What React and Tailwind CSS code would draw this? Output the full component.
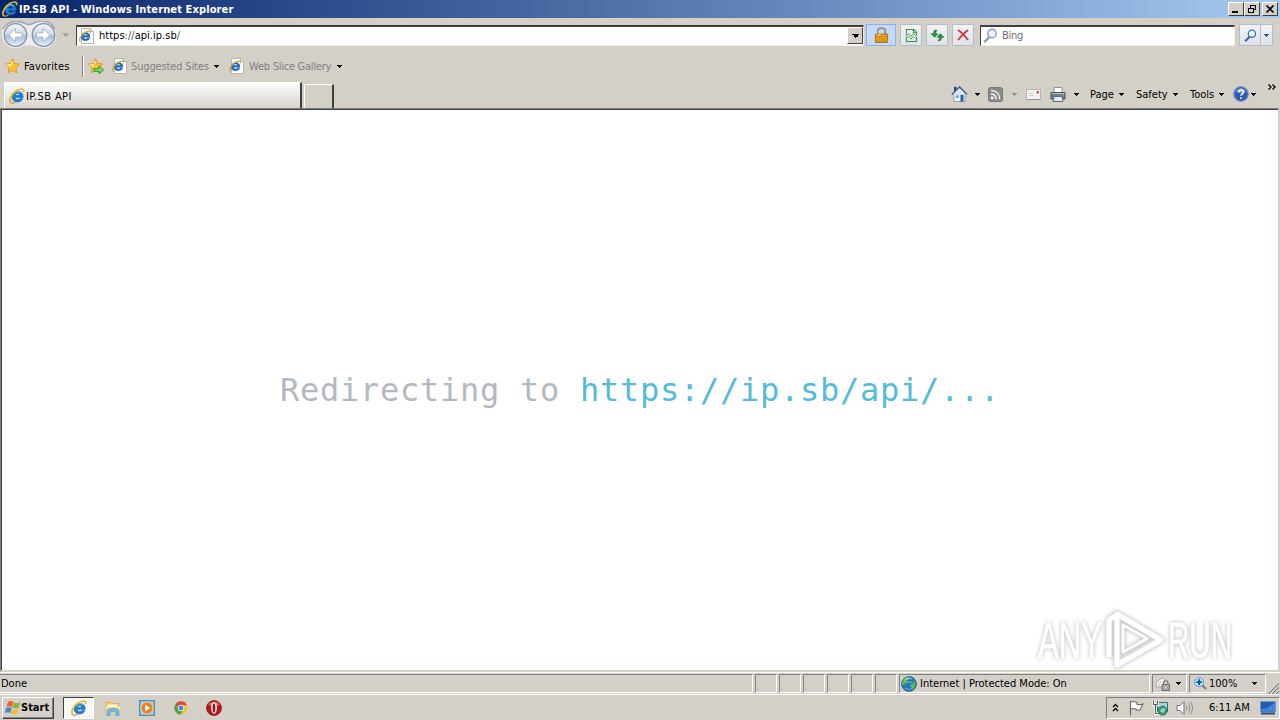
import React from 'react';
import clsx from 'clsx';

/* ---------- Icons ---------- */

const IeLogo = ({ className }) => (
  <svg viewBox="0 0 16 16" className={clsx('shrink-0', className)}>
    <path
      d="M14.200 9.400H6.300c.2 2.700 3.600 2.700 4.600 1h3c-1.700 5.300-10.900 4.700-10.900-1.700C3 1.600 14.700 1.200 14.200 9.400ZM6.300 7.200h4.500c-.2-2.400-4.200-2.400-4.500 0Z"
      fill="#1e80da"
      stroke="#125aa8"
      strokeWidth=".5"
    />
    <path d="M4.500 5.800C5.800 3.600 9.500 3 11.600 4.600" fill="none" stroke="#8fd2fb" strokeWidth="1" />
    <path
      d="M2.300 15C-1.200 13.500 2.200 5.800 7.800 2.600c3.700-2.100 7.900-2.600 6.700 1.700"
      fill="none"
      stroke="#e3b92c"
      strokeWidth="1.700"
    />
    <path d="M2.300 15c1.200.4 2.800-.1 4.200-1" fill="none" stroke="#c9981c" strokeWidth="1.300" />
  </svg>
);

const IePage = ({ className }) => (
  <svg viewBox="0 0 16 16" className={clsx('h-4 w-4 shrink-0', className)}>
    <path d="M2.500.5h9l3 3v12h-12Z" fill="#fff" stroke="#b4b4b4" />
    <path d="M11.500.5v3h3" fill="#eee" stroke="#b4b4b4" />
    <path
      d="M11 9.200H4.600c.2 2.200 2.900 2.300 3.800.9h2.400C9.300 14.300 2 13.600 2.200 8.700 2.400 3.200 11.400 2.800 11 9.200ZM4.700 7.400h3.700c-.2-1.900-3.400-1.900-3.700 0Z"
      fill="#1c6cc4"
      stroke="#1c5ca8"
      strokeWidth=".4"
    />
    <path d="M1.400 13.500C-.8 11.700 2.500 6.300 6.300 4.200c3-1.700 5.800-1.600 5 1" fill="none" stroke="#cfae2c" strokeWidth="1.300" />
  </svg>
);

const Star = ({ arrow }) => (
  <svg viewBox="0 0 16 16" className="h-4 w-4 shrink-0">
    <path
      d="m7.500.8 2 4.700 5.300.5-4 3.600 1.200 5.400-4.500-2.800L3 15l1.200-5.400L.4 6l5.100-.5Z"
      fill="#ffc22e"
      stroke="#e0921c"
      strokeWidth=".9"
    />
    <path d="M7.500 3 6.200 6.400l-3.400.4 3 2" fill="none" stroke="#fff0a0" strokeWidth="1.200" />
    {arrow && <path d="M6 10.500h5V8l4.600 4-4.600 3.700v-2.400H6Z" fill="#7fdc5c" stroke="#24951d" strokeWidth=".9" />}
  </svg>
);

const Caret = ({ className = 'h-[3px] w-[5px]', color = '#000' }) => (
  <svg viewBox="0 0 5 3" className={clsx('shrink-0', className)} shapeRendering="crispEdges">
    <path d="M0 0h5v1H4v1H3v1H2V2H1V1H0Z" fill={color} />
  </svg>
);

const NavButtons = () => (
  <svg viewBox="0 0 56 28" className="h-7 w-14 shrink-0">
    <defs>
      <linearGradient id="orb" x1="0" y1="0" x2="0" y2="1">
        <stop offset="0" stopColor="#f4f7fb" />
        <stop offset=".48" stopColor="#ccd8e8" />
        <stop offset=".52" stopColor="#a9bcd6" />
        <stop offset="1" stopColor="#e6f3ff" />
      </linearGradient>
    </defs>
    <path d="M14 .5c8 0 9 3 14 3S34 .5 42 .5a13.200 13.200 0 0 1 0 26.600c-7 0-8-3-14-3s-7 3-14 3A13.200 13.200 0 0 1 14 .5Z" fill="#eeeeef" />
    <path d="M2 8C8-2 20 0 24 2.500c3 1.500 5 1.500 8 0 5-3 17-5 22 5.500" fill="none" stroke="#a3a4aa" strokeWidth="1.500" />
    {[14.500, 42.500].map((x) => (
      <circle key={x} cx={x} cy="14" r="11.300" fill="url(#orb)" stroke="#8190a5" strokeWidth="1.200" />
    ))}
    <path d="m14.500 7.500-7 6.500 7 6.500v-4.300H21v-4.400h-6.500Z" fill="#fff" stroke="#9babc0" strokeWidth=".8" />
    <path d="m42 7.500 7 6.500-7 6.500v-4.300h-6.500v-4.400H42Z" fill="#fff" stroke="#9babc0" strokeWidth=".8" />
  </svg>
);

const Padlock = ({ className }) => (
  <svg viewBox="0 0 16 17" className={className}>
    <path d="M4 8V5c0-5 8-5 8 0v3" fill="none" stroke="#8c8676" strokeWidth="2" />
    <path d="M4.300 7V5c0-4 7.400-4 7.400 0" fill="none" stroke="#ddd8c8" strokeWidth=".7" />
    <path d="M1.500 7.500h13v9h-13Z" fill="#eaa91d" stroke="#ad720a" />
    <path d="M2 10h12M2 12.500h12M2 15h12" stroke="#bd7e0c" strokeWidth=".9" />
    <path d="M3 8.500h4" stroke="#ffe17c" />
  </svg>
);

const BrokenPage = () => (
  <svg viewBox="0 0 14 16" className="h-[15px] w-[13px]">
    <path d="M1.500 8V1.500h8l3 3V8M9 1.500V5h3.500M1.500 10v4.500h11V10" fill="none" stroke="#3b9148" strokeWidth="1.100" />
    <path d="m1 9 3-3 2.500 3L9 6l3.500 3M1 12l3-3 2.500 3L9 9l3.500 3" fill="none" stroke="#4fa65a" />
  </svg>
);

const Refresh = () => (
  <svg viewBox="0 0 16 14" className="h-[13px] w-[15px]">
    <path d="M7.500 1.500C5 .5 3.600 2 3.600 5H1l4 4 3.500-4H6c0-1.500.4-2.500 1.500-3.500Z" fill="#299139" stroke="#16702a" strokeWidth=".6" />
    <path d="M8.500 12.500c2.500 1 3.900-.5 3.900-3.500H15l-4-4-3.500 4H10c0 1.500-.4 2.500-1.500 3.500Z" fill="#299139" stroke="#16702a" strokeWidth=".6" />
  </svg>
);

const Cross = () => (
  <svg viewBox="0 0 12 12" className="h-3 w-3">
    <path d="M1 1c4 2.500 7 6 10 10M11 1C7 4 4 7.500 1 11" fill="none" stroke="#c93a41" strokeWidth="1.900" />
  </svg>
);

const Glass = ({ className, color }) => (
  <svg viewBox="0 0 16 16" className={className}>
    <path d="M7 9.500 1.300 15" stroke={color} strokeWidth="2.600" />
    <circle cx="9.700" cy="5.800" r="4.500" fill="#e8f3fd" stroke={color} strokeWidth="1.500" />
    <path d="M7.200 5.500c.3-1.500 1.500-2.200 2.800-2.200" fill="none" stroke="#fff" />
  </svg>
);

const Home = () => (
  <svg viewBox="0 0 17 16" className="h-4 w-[17px] shrink-0">
    <path d="M3 8h11v7.500H3Z" fill="#f2f6fb" stroke="#7d8ba3" strokeWidth=".8" />
    <path d="M3 .8h2.500v5H3Z" fill="#273f7b" />
    <path d="M.8 8.500 8.500 1l7.700 7.500" fill="#dce7f5" stroke="#435c91" strokeWidth="1.500" />
    <path d="M9.500 9h3v6.500h-3Z" fill="#17659e" />
    <path d="M4.800 9.300h3v2.800h-3Z" fill="#6fa5d3" />
  </svg>
);

const Feed = () => (
  <svg viewBox="0 0 15 15" className="h-[15px] w-[15px] shrink-0">
    <rect x=".5" y=".5" width="14" height="14" rx="2" fill="#8b8b8b" stroke="#777" />
    <circle cx="4.200" cy="11" r="1.400" fill="#fff" />
    <path d="M3 7c3 0 5 2 5 5.200M3 3.500c5.500 0 8.700 3.500 8.700 8.700" fill="none" stroke="#f4f4f4" strokeWidth="1.500" />
  </svg>
);

const Mail = () => (
  <svg viewBox="0 0 15 11" className="h-[11px] w-[15px] shrink-0">
    <path d="M.5.500h14v10H.5Z" fill="#f3f2f1" stroke="#b9b5b4" />
    <path d="M2 4.500h5M3 6.500h5" stroke="#d5d2d0" />
    <path d="M10.500 2H13v2.500h-2.500Z" fill="#cf5a57" />
    <path d="M.5 10.500h14" stroke="#929090" />
  </svg>
);

const Printer = () => (
  <svg viewBox="0 0 16 15" className="h-[15px] w-4 shrink-0">
    <path d="M4 .5h8V6H4Z" fill="#fff" stroke="#8b929a" />
    <path d="M1 5.500h14v6.500H1Z" fill="#737b84" stroke="#4b525a" />
    <path d="M1.500 6.500h13" stroke="#b9c0c7" />
    <path d="M4 9.500h8l1 5H3Z" fill="#dcecfb" stroke="#646b75" />
    <path d="M12.500 8h1.500" stroke="#8ad15d" />
  </svg>
);

const Help = () => (
  <svg viewBox="0 0 16 16" className="h-4 w-4 shrink-0">
    <circle cx="8" cy="8" r="7.300" fill="#2b58b9" stroke="#8795b2" strokeWidth="1.200" />
    <path d="M3 6c1-5 9-5 10 0-3 1-6 1.400-10 0Z" fill="#779ee3" />
    <path d="M5.800 6.300c0-3.200 4.800-3 4.600-.2C10.300 7.800 8 7.800 8 9.700M8 11.200v1.700" fill="none" stroke="#fff" strokeWidth="1.600" />
  </svg>
);

const Globe = () => (
  <svg viewBox="0 0 16 16" className="h-4 w-4 shrink-0">
    <circle cx="8" cy="8" r="7.400" fill="#2470bb" stroke="#285b81" strokeWidth=".8" />
    <path d="M3 3c3-3 5-2 5-1L6 4l1 2-3 1-.5 2.500-2.500-1C1 6 1 5 3 3ZM12 4l2 2c1 4-1 7-3 8l-.5-2.500-2-1.500 1.500-2 2.500-1Z" fill="#54bd49" />
    <path d="M2.800 5c2-4 7-4 9-1.500C9 3 6 3 2.800 5Z" fill="#c1e8fb" opacity=".7" />
    <path d="M4 12c3 2 6 2 8-1M5 7.500c2-2 4-2 6-1" fill="none" stroke="#6dc8ef" />
  </svg>
);

const ZoneLock = () => (
  <svg viewBox="0 0 16 15" className="h-[15px] w-4 shrink-0">
    <path d="M1 11C1 5 6 1 10 3l-3 8Z" fill="#f7f7f7" stroke="#aaa9a6" />
    <path d="m3 11 3-6M6 11l4-6" stroke="#bbb9b6" />
    <path d="M8.500 9V7c0-3 4.500-3 4.500 0v2" fill="none" stroke="#77736f" strokeWidth="1.200" />
    <path d="M7 8.500h7.500v6H7Z" fill="#aaa6a4" stroke="#76716e" />
    <path d="M10.700 10.500v2" stroke="#fff" />
  </svg>
);

const ZoomIn = () => (
  <svg viewBox="0 0 14 14" className="h-[13px] w-[13px] shrink-0">
    <path d="m8.500 8.500 4.500 4.500" stroke="#8a7a66" strokeWidth="2.200" />
    <circle cx="5.500" cy="5.500" r="4.800" fill="#c5e3fb" stroke="#5295d1" />
    <path d="M5.500 2.500v6M2.500 5.500h6" stroke="#0758ad" strokeWidth="2" />
  </svg>
);

const WindowsFlag = () => (
  <svg viewBox="0 0 16 16" className="h-4 w-4 shrink-0">
    <path d="M3 2c2-1.500 4-1 5.500 0L7 7.200C5 6 3.500 6 1.500 7Z" fill="#ed6130" />
    <path d="M9.200 2.500c2 1 4 1 6-.2L13.700 7.500c-2 1.200-4 1-6 .2Z" fill="#80b637" />
    <path d="M1.200 8c2-1 3.800-1 5.500.2l-1.500 5C3.500 12 2 12.100-.1 13Z" fill="#4285cb" />
    <path d="M7.500 8.800c2 1 4 1 6-.2L12 13.700c-2 1.200-4 1-6 .1Z" fill="#f5bd2b" />
  </svg>
);

const Folder = () => (
  <svg viewBox="0 0 16 16" className="h-4 w-4 shrink-0">
    <path d="M1 2h5l1.500 1.500H14V14H1Z" fill="#edca65" stroke="#d1a33d" strokeWidth=".7" />
    <path d="M2.500 4.500h10v3h-10Z" fill="#fffbe2" />
    <path d="M1 6.500h14V14H1Z" fill="#f9e499" />
    <path d="M2 15.500V11c0-2 2-2.500 6-2.500s6 .5 6 2.500v4.500h-3V12H5v3.500Z" fill="#75bce9" stroke="#4d9aca" strokeWidth=".7" />
  </svg>
);

const MediaPlayer = () => (
  <svg viewBox="0 0 16 16" className="h-4 w-4 shrink-0">
    <path d="M.7.7h14.600v14.600H.7Z" fill="#a4cded" stroke="#4d8fbd" strokeWidth="1.300" />
    <circle cx="8" cy="8" r="5.900" fill="#f07d16" stroke="#f8d4a2" strokeWidth=".8" />
    <path d="m6.200 4.500 5.200 3.500-5.200 3.500Z" fill="#fff" />
  </svg>
);

const Chrome = () => (
  <svg viewBox="0 0 16 16" className="h-[14px] w-[14px] shrink-0">
    <circle cx="8" cy="8" r="7.600" fill="#efc93b" />
    <path d="M1.400 4.200A7.600 7.600 0 0 1 14.900 4.800H8L4.700 8Z" fill="#d94b3d" />
    <path d="M1.400 4.200A7.600 7.600 0 0 0 7.200 15.600l3.500-5.200-5.700-1Z" fill="#47a34e" />
    <circle cx="8" cy="8" r="3.600" fill="#eef5f9" />
    <circle cx="8" cy="8" r="2.800" fill="#4788c9" />
  </svg>
);

const Opera = () => (
  <svg viewBox="0 0 16 16" className="h-4 w-4 shrink-0">
    <circle cx="8" cy="8" r="7.500" fill="#b8161b" stroke="#851416" strokeWidth=".7" />
    <path d="M2.500 4.500c2-3 8.500-4 11 0-2 2.500-8 2-11 0Z" fill="#e56b67" />
    <ellipse cx="8" cy="8" rx="2.900" ry="5.800" fill="#fff" />
    <ellipse cx="8" cy="8" rx="1.400" ry="4.600" fill="#8e171b" />
  </svg>
);

const Flag = () => (
  <svg viewBox="0 0 16 16" className="h-4 w-4 shrink-0">
    <path d="M2.500 1v14.500M3 2c3-1.500 4 0 6 .5v1.800c2 .6 4 .4 6-.3l-3 6c-2 .6-3.500 0-4.500-1-1.500-.8-3-.6-4.500 0" fill="#fafafa" stroke="#6c6b69" strokeWidth="1.100" />
  </svg>
);

const Network = () => (
  <svg viewBox="0 0 16 16" className="h-4 w-4 shrink-0">
    <path d="M5.500 2.500h10v9h-10Z" fill="#9fd5dc" stroke="#4e6668" />
    <path d="M1.500.5v4h4v-4M3.500 4.500v9h4" fill="none" stroke="#fff" strokeWidth="2.800" />
    <path d="M1.500.5v4h4v-4M3.500 4.500v9h4" fill="none" stroke="#5e5e5c" strokeWidth="1.200" />
    <circle cx="10.500" cy="10.700" r="4.600" fill="#34947f" stroke="#26675e" strokeWidth=".6" />
    <path d="m7.500 11 3-3 3 1-2 4Z" fill="#8fe0a4" />
  </svg>
);

const Speaker = () => (
  <svg viewBox="0 0 17 16" className="h-4 w-[17px] shrink-0">
    <path d="M1 5.500h3L8 1.500v13L4 10.500H1Z" fill="#f7f7f7" stroke="#727272" />
    <path d="M10 5.500c1.300 1.500 1.300 3.500 0 5M12 3.500c2.400 2.500 2.400 6.500 0 9M14 1.800c3.300 3.500 3.300 9 0 12.500" fill="none" stroke="#888" />
  </svg>
);

const Desktop = () => (
  <svg viewBox="0 0 16 14" className="h-[14px] w-4 shrink-0">
    <path d="M.5.5h15v10.500H.5Z" fill="#205aaf" stroke="#7498cb" />
    <path d="M1 8C6 8 11 5 15 1v9.500H1Z" fill="#3d83d6" />
    <path d="M1 12.500h14" stroke="#374b6d" strokeWidth="2" />
  </svg>
);

const Watermark = () => (
  <div className="absolute top-[608px] left-[1034px] h-16 w-[208px] opacity-90 drop-shadow-[0_0_2px_#b0b0b0]">
    <svg
      viewBox="-4 0 208 64"
      className="h-16 w-[208px]"
      fontFamily="'Liberation Sans', sans-serif"
      fontSize="50"
      fill="#fff"
      stroke="#fff"
      strokeWidth=".8"
    >
      <text x="0" y="50" textLength="64" lengthAdjust="spacingAndGlyphs">ANY</text>
      <text x="130" y="50" textLength="64" lengthAdjust="spacingAndGlyphs">RUN</text>
      <g fill="none" stroke="#dcdcdc" strokeLinejoin="round">
        <path d="M71 49V12l6-4M79 6l44 26-44 25Z" strokeWidth="6.500" />
        <path d="M85 17v27l24-13.500Z" strokeWidth="4" />
        <path d="M71 49V12l6-4M79 6l44 26-44 25Z" stroke="#fff" strokeWidth="5" />
        <path d="M85 17v27l24-13.500Z" stroke="#fff" strokeWidth="2.500" />
        <path d="M82 13v38l33-19" stroke="#e2e2e2" strokeWidth="1" />
      </g>
    </svg>
  </div>
);

/* ---------- Small building blocks ---------- */

const Label = ({ className, children }) => (
  <span className={clsx('block shrink-0 whitespace-nowrap', className)}>{children}</span>
);

const CaptionButton = ({ className, children }) => (
  <div
    className={clsx(
      'flex h-[14px] w-4 items-center justify-center border border-t-white border-r-[#404040] border-b-[#404040] border-l-white bg-[#d4d0c8]',
      className
    )}
  >
    <svg viewBox="0 0 14 12" className="h-3 w-[14px]" fill="none" stroke="#000" shapeRendering="crispEdges">
      {children}
    </svg>
  </div>
);

const ToolButton = ({ className = 'w-[22px]', children }) => (
  <div
    className={clsx(
      'flex h-[22px] shrink-0 items-center justify-center rounded-[1px] border border-[#b3bccb] bg-linear-to-b from-[#f0f2f5] to-[#dfe3e9]',
      className
    )}
  >
    {children}
  </div>
);

/* ---------- Window parts ---------- */

const TitleBar = () => (
  <div className="flex h-[18px] items-center bg-linear-to-r from-[#0a246a] to-[#a6caf0] pl-[2px]">
    <IeLogo className="h-4 w-4" />
    <Label className="ml-[1px] text-[11px] font-bold tracking-[0.12px] text-white">IP.SB API - Windows Internet Explorer</Label>
    <div className="ml-auto flex pr-[2px]">
      <CaptionButton>
        <path d="M3 9h6" strokeWidth="2" />
      </CaptionButton>
      <CaptionButton>
        <path d="M5 2h6M5.500 2v3M10.500 2v5M9 6.500h2M3 5h6M3.500 5v5M8.500 5v5M3 9.500h6" />
      </CaptionButton>
      <CaptionButton className="ml-[2px]">
        <path d="m3.500 2.500 7 7M10.500 2.500l-7 7" strokeWidth="1.700" shapeRendering="auto" />
      </CaptionButton>
    </div>
  </div>
);

const AddressRow = () => (
  <div className="flex h-[34px] items-center pl-[1px]">
    <NavButtons />
    <Caret className="ml-[5px] h-1 w-[7px]" color="#aaa69f" />
    <div className="ml-[7px] flex h-[21px] w-[788px] shrink-0 items-center border border-t-2 border-[#f0eee8] border-t-[#404040] border-l-[#404040] bg-white">
      <IePage className="ml-[2px]" />
      <Label className="ml-1 tracking-[0.02px]">
        https<span className="text-[#555]">://</span>api.ip.sb<span className="text-[#555]">/</span>
      </Label>
      <div className="ml-auto flex h-[17px] w-4 items-center justify-center border border-white border-r-[#404040] border-b-[#404040] bg-[#d4d0c8]">
        <Caret className="h-1 w-[7px]" />
      </div>
    </div>
    <div className="ml-[2px] flex h-[22px] w-[30px] shrink-0 items-center justify-center border border-[#8fb2ee] bg-[#c5dafa]">
      <Padlock className="h-4 w-[15px]" />
    </div>
    <ToolButton className="ml-1 w-[22px]"><BrokenPage /></ToolButton>
    <ToolButton className="ml-1 w-[22px]"><Refresh /></ToolButton>
    <ToolButton className="ml-1 w-[22px]"><Cross /></ToolButton>
    <div className="ml-[6px] flex h-[21px] w-[255px] shrink-0 items-center border border-t-2 border-[#f0eee8] border-t-[#404040] border-l-[#404040] bg-white">
      <Glass className="ml-[2px] h-[15px] w-[15px]" color="#8e9fb3" />
      <Label className="ml-[4px] tracking-[-0.3px] text-[#6d6d6d]">Bing</Label>
    </div>
    <ToolButton className="ml-1 w-[22px]"><Glass className="h-[13px] w-[13px]" color="#3267bd" /></ToolButton>
    <ToolButton className="-ml-px w-[13px]"><Caret color="#285aa9" /></ToolButton>
  </div>
);

const FavoritesRow = () => (
  <div className="flex h-[28px] items-center pl-[5px]">
    <Star />
    <Label className="ml-[3px] w-[58px] tracking-[0.1px]">Favorites</Label>
    <div className="h-[21px] w-px bg-[#808080]" />
    <div className="mr-[4px] h-[21px] w-px bg-white" />
    <Star arrow />
    <IePage className="ml-2" />
    <Label className="ml-[3px] w-[83px] tracking-[-0.15px] text-[#808080]">Suggested Sites</Label>
    <Caret />
    <IePage className="ml-[10px]" />
    <Label className="ml-[4px] w-[88px] tracking-[-0.25px] text-[#808080]">Web Slice Gallery</Label>
    <Caret />
  </div>
);

const menus = [
  { label: 'Page', width: 'w-[29px]' },
  { label: 'Safety', width: 'w-[37px]' },
  { label: 'Tools', width: 'w-[29px]' },
];

const TabRow = () => (
  <div className="flex h-[28px] items-end pl-[4px]">
    <div className="flex h-[26px] w-[298px] items-center border-t border-r-2 border-l border-white border-r-[#404040] bg-linear-to-b from-[#fdfdfc] to-[#d8d4cd] pl-[4px]">
      <IeLogo className="h-4 w-4" />
      <Label className="ml-[1px] pt-px tracking-[0.4px]">IP.SB API</Label>
    </div>
    <div className="ml-[2px] h-[24px] w-[30px] border-t border-r-2 border-l border-white border-r-[#404040]" />
    <div className="ml-auto flex h-[28px] items-center">
      <Home />
      <Caret className="ml-[7px] h-[3px] w-[5px]" />
      <span className="ml-2"><Feed /></span>
      <Caret className="ml-[9px] h-[3px] w-[5px]" color="#98948c" />
      <span className="ml-[9px]"><Mail /></span>
      <span className="ml-[9px]"><Printer /></span>
      <Caret className="ml-2 h-[3px] w-[5px]" />
      <div className="ml-[11px] flex items-center gap-[12px]">
        {menus.map((m) => (
          <div key={m.label} className="flex items-center">
            <Label className={m.width}>{m.label}</Label>
            <Caret />
          </div>
        ))}
      </div>
      <span className="ml-[9px]"><Help /></span>
      <Caret className="ml-[2px] h-[3px] w-[5px]" />
      <svg viewBox="0 0 8 6" className="mr-[4px] mb-[14px] ml-[12px] h-[6px] w-2" fill="none" stroke="#000">
        <path d="m.5.5 2.500 2.500L.5 5.500M4.500.5 7 3 4.500 5.500" strokeWidth="1.300" />
      </svg>
    </div>
  </div>
);

const Page = () => (
  <div className="flex h-[564px] items-center justify-center border-t border-r-2 border-b-2 border-l border-t-[#808080] border-r-[#d4d0c8] border-b-[#d4d0c8] border-l-[#808080]">
    <div className="flex h-full w-full items-center justify-center border-t border-l border-[#404040] bg-white">
      <div className="font-['DejaVu_Sans_Mono',monospace] text-[32px] leading-10 tracking-[0.735px] whitespace-pre text-[#b2b9c0]">
        Redirecting to <span className="text-[#53bcd8]">https://ip.sb/api/...</span>
      </div>
    </div>
  </div>
);

const Pane = ({ className, children }) => (
  <div className={clsx('flex h-[19px] shrink-0 items-center border border-[#808080] border-r-white border-b-white', className)}>
    {children}
  </div>
);

const StatusBar = () => (
  <div className="flex h-[22px] items-center gap-[2px] border-t border-white">
    <Pane className="w-[753px] border-l-0">
      <Label className="ml-[1px]">Done</Label>
    </Pane>
    {[0, 1, 2, 3, 4, 5].map((i) => (
      <Pane key={i} className="w-[22px]" />
    ))}
    <Pane className="w-[251px]">
      <span className="ml-px"><Globe /></span>
      <Label className="ml-[3px]">Internet | Protected Mode: On</Label>
    </Pane>
    <Pane className="w-[35px] pl-[2px]">
      <ZoneLock />
      <Caret className="ml-[5px] h-[3px] w-[5px]" />
    </Pane>
    <Pane className="w-[77px] pl-[4px]">
      <ZoomIn />
      <Label className="ml-[2px] w-[43px]">100%</Label>
      <Caret />
    </Pane>
    <svg viewBox="0 0 12 12" className="-ml-px h-3 w-3 shrink-0 self-end" stroke="#808080" strokeWidth="1.500">
      <path d="M1 12 12 1M5 12l7-7M9 12l3-3" />
      <path d="M0 12 12 0M4 12l8-8M8 12l4-4" stroke="#fff" strokeWidth=".6" />
    </svg>
  </div>
);

const TaskBar = () => (
  <div className="flex h-[26px] items-center border-t border-white">
    <div className="ml-[2px] flex h-[22px] w-[52px] items-center border border-t-white border-r-[#404040] border-b-[#404040] border-l-white pl-[2px] shadow-[inset_-1px_-1px_0_#808080]">
      <WindowsFlag />
      <Label className="text-[11px] font-bold">Start</Label>
    </div>
    <div className="ml-[9px] flex h-[22px] w-[31px] items-center justify-center border border-t-[#404040] border-r-white border-b-white border-l-[#404040] bg-[#f8f7f5]">
      <IeLogo className="h-4 w-4" />
    </div>
    <span className="ml-[11px]"><Folder /></span>
    <span className="ml-[18px]"><MediaPlayer /></span>
    <span className="ml-[19px]"><Chrome /></span>
    <span className="ml-[18px]"><Opera /></span>
    <div className="ml-auto flex h-[22px] w-[174px] items-center border border-[#808080] border-r-white border-b-white pl-[5px]">
      <svg viewBox="0 0 7 9" className="h-[9px] w-[7px]" fill="none" stroke="#000" strokeWidth="1.300">
        <path d="m1 4 2.500-2.500L6 4M1 8l2.500-2.500L6 8" />
      </svg>
      <span className="ml-[9px]"><Flag /></span>
      <span className="ml-[8px]"><Network /></span>
      <span className="ml-[8px]"><Speaker /></span>
      <Label className="ml-[16px] w-[51px]">6:11 AM</Label>
      <Desktop />
    </div>
  </div>
);

export default function App() {
  return (
    <div className="relative flex h-[720px] w-[1280px] flex-col overflow-hidden bg-[#d4d0c8] font-['DejaVu_Sans_Condensed','DejaVu_Sans',sans-serif] text-[11px] leading-[13px] text-black">
      <TitleBar />
      <AddressRow />
      <FavoritesRow />
      <TabRow />
      <Page />
      <StatusBar />
      <TaskBar />
      <Watermark />
    </div>
  );
}
